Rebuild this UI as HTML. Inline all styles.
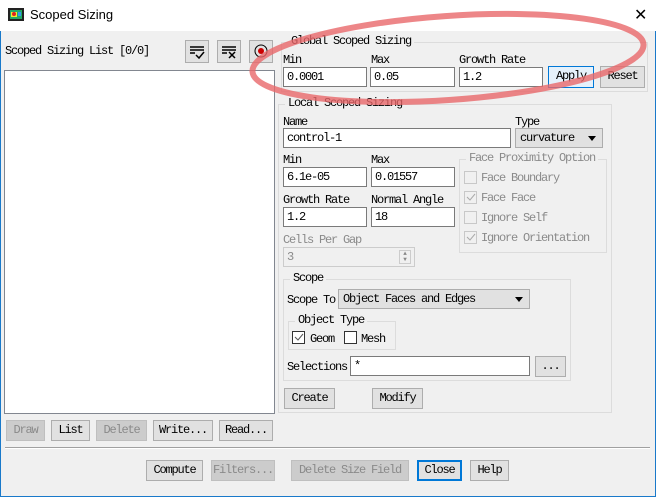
<!DOCTYPE html>
<html><head><meta charset="utf-8"><style>
*{box-sizing:border-box;margin:0;padding:0}
body{width:656px;height:497px;overflow:hidden;background:#f0f0f0;position:relative;font-family:"Liberation Mono","Noto Sans CJK SC",monospace;font-size:12px;letter-spacing:-1.2px;color:#000}
.a{position:absolute;white-space:nowrap}
.win{position:absolute;left:0;top:0;width:656px;height:497px;border:1px solid #1979ca;border-top:none}
.tb{position:absolute;left:0;top:0;width:656px;height:31px;background:#fff}
.in{position:absolute;background:#fff;border:1px solid #7a7a7a;height:20px;padding:3px 3px;line-height:13px}
.bt{position:absolute;background:#e1e1e1;border:1px solid #adadad;height:21px;text-align:center;line-height:19px}
.dis{color:#8a8a8a;background:#cccccc;border-color:#bfbfbf}
.gb{position:absolute;border:1px solid #dcdcdc}
.lg{position:absolute;background:#f0f0f0;padding:0 3px;top:-8px;left:6px;line-height:13px}
.cb{position:absolute;width:13px;height:13px;border:1px solid #333;background:#fff}
.cbd{border-color:#c8c8c8;background:#f0f0f0}
.sel{position:absolute;background:#e1e1e1;border:1px solid #adadad;height:20px;padding:3px 4px;line-height:13px}
.arr{position:absolute;right:6px;top:7px;width:0;height:0;border-left:4px solid transparent;border-right:4px solid transparent;border-top:5px solid #000}
</style></head><body>
<div class="win"></div>
<div class="tb"></div>
<svg class="a" style="left:8px;top:8px" width="16" height="13"><rect x="0" y="0" width="16" height="13" fill="#222"/><rect x="2" y="2" width="12" height="9" fill="#2a6"/><rect x="3" y="4" width="6" height="5" fill="#ee3"/><circle cx="6" cy="6" r="2" fill="#d22"/><rect x="10" y="4" width="3" height="4" fill="#39e"/></svg>
<div class="a" style="left:30px;top:7px;font-family:'Liberation Sans',sans-serif;font-size:13px;letter-spacing:0">Scoped Sizing</div>
<div class="a" style="left:634px;top:5px;font-family:'Liberation Sans',sans-serif;font-size:16px;letter-spacing:0">✕</div>

<div class="a" style="left:5px;top:44px">Scoped Sizing List [0/0]</div>
<div class="bt" style="left:185px;top:40px;width:24px;height:23px"><svg width="22" height="21"><path d="M4 6h14M4 9h14M4 12h5M10 14l3 3 5-6" stroke="#000" stroke-width="1.5" fill="none"/></svg></div>
<div class="bt" style="left:217px;top:40px;width:24px;height:23px"><svg width="22" height="21"><path d="M4 6h14M4 9h14M4 12h5M11 11l6 6M17 11l-6 6" stroke="#000" stroke-width="1.5" fill="none"/></svg></div>
<div class="bt" style="left:249px;top:40px;width:24px;height:23px"><svg width="22" height="21"><circle cx="11" cy="10" r="6" stroke="#000" fill="none"/><circle cx="11" cy="10" r="3" fill="#c00"/></svg></div>
<div class="a" style="left:4px;top:70px;width:271px;height:344px;background:#fff;border:1px solid #828790"></div>

<div class="bt dis" style="left:6px;top:420px;width:39px">Draw</div>
<div class="bt" style="left:51px;top:420px;width:39px">List</div>
<div class="bt dis" style="left:96px;top:420px;width:51px">Delete</div>
<div class="bt" style="left:153px;top:420px;width:60px">Write...</div>
<div class="bt" style="left:219px;top:420px;width:54px">Read...</div>
<div class="a" style="left:5px;top:447px;width:645px;height:2px;border-top:1px solid #a0a0a0;border-bottom:1px solid #fff"></div>

<div class="bt" style="left:146px;top:460px;width:57px">Compute</div>
<div class="bt dis" style="left:211px;top:460px;width:64px">Filters...</div>
<div class="bt dis" style="left:291px;top:460px;width:118px">Delete Size Field</div>
<div class="bt" style="left:417px;top:460px;width:45px;border:2px solid #0078d7;line-height:17px">Close</div>
<div class="bt" style="left:470px;top:460px;width:39px">Help</div>

<div class="gb" style="left:281px;top:42px;width:367px;height:50px"><div class="lg">Global Scoped Sizing</div></div>
<div class="a" style="left:283px;top:53px">Min</div>
<div class="a" style="left:371px;top:53px">Max</div>
<div class="a" style="left:459px;top:53px">Growth Rate</div>
<div class="in" style="left:283px;top:67px;width:84px">0.0001</div>
<div class="in" style="left:370px;top:67px;width:85px">0.05</div>
<div class="in" style="left:459px;top:67px;width:84px">1.2</div>
<div class="bt" style="left:548px;top:66px;width:46px;height:22px;background:#e5f1fb;border-color:#0078d7">Apply</div>
<div class="bt" style="left:600px;top:66px;width:45px;height:22px">Reset</div>

<div class="gb" style="left:278px;top:104px;width:334px;height:309px"><div class="lg">Local Scoped Sizing</div></div>
<div class="a" style="left:283px;top:115px">Name</div>
<div class="a" style="left:515px;top:115px">Type</div>
<div class="in" style="left:283px;top:128px;width:228px">control-1</div>
<div class="sel" style="left:515px;top:128px;width:88px">curvature<div class="arr"></div></div>
<div class="a" style="left:283px;top:153px">Min</div>
<div class="a" style="left:371px;top:153px">Max</div>
<div class="in" style="left:283px;top:167px;width:84px">6.1e-05</div>
<div class="in" style="left:371px;top:167px;width:84px">0.01557</div>
<div class="a" style="left:283px;top:193px">Growth Rate</div>
<div class="a" style="left:371px;top:193px">Normal Angle</div>
<div class="in" style="left:283px;top:207px;width:84px">1.2</div>
<div class="in" style="left:371px;top:207px;width:84px">18</div>
<div class="a" style="left:283px;top:233px;color:#8a8a8a">Cells Per Gap</div>
<div class="in" style="left:283px;top:247px;width:132px;border-color:#ccc;background:#f0f0f0;color:#8a8a8a">3</div>
<div class="a" style="left:399px;top:250px;width:12px;height:14px;border:1px solid #ccc;font-size:6px;line-height:6px;text-align:center;color:#888;letter-spacing:0">▲<br>▼</div>

<div class="gb" style="left:459px;top:159px;width:148px;height:94px"><div class="lg" style="color:#8a8a8a">Face Proximity Option</div></div>
<div class="cb cbd" style="left:464px;top:171px"></div><div class="a" style="left:481px;top:171px;color:#8a8a8a">Face Boundary</div>
<div class="cb cbd" style="left:464px;top:191px"><svg width="11" height="11" style="position:absolute;left:0;top:0"><path d="M2 5l3 3 5-6" stroke="#aaa" fill="none"/></svg></div><div class="a" style="left:481px;top:191px;color:#8a8a8a">Face Face</div>
<div class="cb cbd" style="left:464px;top:211px"></div><div class="a" style="left:481px;top:211px;color:#8a8a8a">Ignore Self</div>
<div class="cb cbd" style="left:464px;top:231px"><svg width="11" height="11" style="position:absolute;left:0;top:0"><path d="M2 5l3 3 5-6" stroke="#aaa" fill="none"/></svg></div><div class="a" style="left:481px;top:231px;color:#8a8a8a">Ignore Orientation</div>

<div class="gb" style="left:283px;top:279px;width:288px;height:102px"><div class="lg">Scope</div></div>
<div class="a" style="left:287px;top:293px">Scope To</div>
<div class="sel" style="left:338px;top:289px;width:192px">Object Faces and Edges<div class="arr"></div></div>
<div class="gb" style="left:288px;top:321px;width:108px;height:29px"><div class="lg">Object Type</div></div>
<div class="cb" style="left:292px;top:331px"><svg width="11" height="11" style="position:absolute;left:0;top:0"><path d="M2 5l3 3 5-6" stroke="#555" fill="none"/></svg></div><div class="a" style="left:310px;top:332px">Geom</div>
<div class="cb" style="left:344px;top:331px"></div><div class="a" style="left:361px;top:332px">Mesh</div>
<div class="a" style="left:287px;top:360px">Selections</div>
<div class="in" style="left:350px;top:356px;width:180px">*</div>
<div class="bt" style="left:535px;top:356px;width:31px">...</div>
<div class="bt" style="left:284px;top:388px;width:51px">Create</div>
<div class="bt" style="left:372px;top:388px;width:51px">Modify</div>

<svg class="a" style="left:0;top:0" width="656" height="497"><ellipse cx="448" cy="58" rx="196" ry="42" transform="rotate(-4 448 58)" fill="none" stroke="#e8686a" stroke-opacity="0.8" stroke-width="6"/></svg>
</body></html>
